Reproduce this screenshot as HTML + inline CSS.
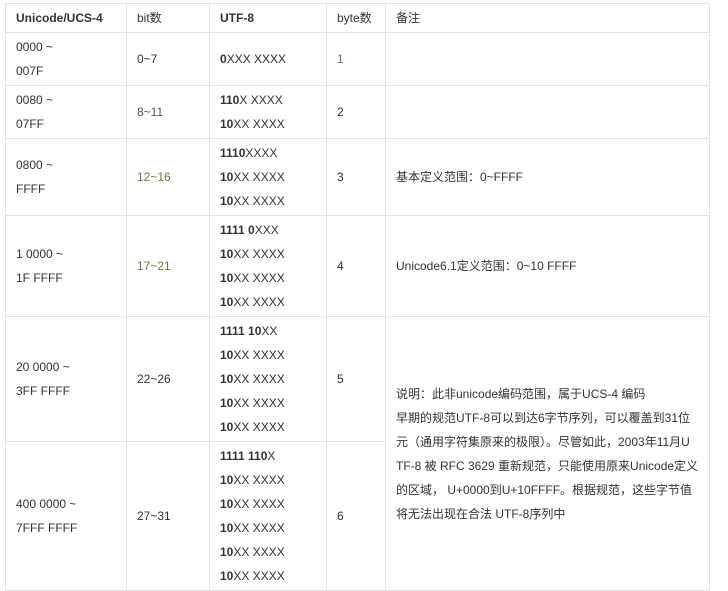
<!DOCTYPE html><html><head><meta charset="utf-8"><style>
body{margin:0;background:#fff;width:728px;height:591px;overflow:hidden;font-family:"Liberation Sans","Noto Sans CJK SC",sans-serif;font-size:12px;color:#333}
.c{position:absolute;box-sizing:border-box;border:1px solid #e3e3e3;display:flex;align-items:center;padding-left:10px;line-height:24px}
b{font-weight:bold}
</style></head><body>
<div style="position:relative">
<div class="c" style="left:5px;top:3px;width:122px;height:30px"><b>Unicode/UCS-4</b></div>
<div class="c" style="left:126px;top:3px;width:84px;height:30px">bit数</div>
<div class="c" style="left:209px;top:3px;width:118px;height:30px"><b>UTF-8</b></div>
<div class="c" style="left:326px;top:3px;width:60px;height:30px">byte数</div>
<div class="c" style="left:385px;top:3px;width:325px;height:30px">备注</div>
<div class="c" style="left:5px;top:32px;width:122px;height:54px"><div>0000 ~<br>007F</div></div>
<div class="c" style="left:126px;top:32px;width:84px;height:54px">0~7</div>
<div class="c" style="left:209px;top:32px;width:118px;height:54px"><div><b>0</b>XXX XXXX</div></div>
<div class="c" style="left:326px;top:32px;width:60px;height:54px;color:#8a6a3a">1</div>
<div class="c" style="left:385px;top:32px;width:325px;height:54px"></div>
<div class="c" style="left:5px;top:85px;width:122px;height:54px"><div>0080 ~<br>07FF</div></div>
<div class="c" style="left:126px;top:85px;width:84px;height:54px;color:#5a4a7a">8~11</div>
<div class="c" style="left:209px;top:85px;width:118px;height:54px"><div><b>110</b>X XXXX<br><b>10</b>XX XXXX</div></div>
<div class="c" style="left:326px;top:85px;width:60px;height:54px">2</div>
<div class="c" style="left:385px;top:85px;width:325px;height:54px"></div>
<div class="c" style="left:5px;top:138px;width:122px;height:78px"><div>0800 ~<br>FFFF</div></div>
<div class="c" style="left:126px;top:138px;width:84px;height:78px;color:#8a6a3a">12~16</div>
<div class="c" style="left:209px;top:138px;width:118px;height:78px"><div><b>1110</b>XXXX<br><b>10</b>XX XXXX<br><b>10</b>XX XXXX</div></div>
<div class="c" style="left:326px;top:138px;width:60px;height:78px">3</div>
<div class="c" style="left:385px;top:138px;width:325px;height:78px">基本定义范围：0~FFFF</div>
<div class="c" style="left:5px;top:215px;width:122px;height:102px"><div>1 0000 ~<br>1F FFFF</div></div>
<div class="c" style="left:126px;top:215px;width:84px;height:102px;color:#8a6a3a">17~21</div>
<div class="c" style="left:209px;top:215px;width:118px;height:102px"><div><b>1111 0</b>XXX<br><b>10</b>XX XXXX<br><b>10</b>XX XXXX<br><b>10</b>XX XXXX</div></div>
<div class="c" style="left:326px;top:215px;width:60px;height:102px">4</div>
<div class="c" style="left:385px;top:215px;width:325px;height:102px">Unicode6.1定义范围：0~10 FFFF</div>
<div class="c" style="left:5px;top:316px;width:122px;height:126px"><div>20 0000 ~<br>3FF FFFF</div></div>
<div class="c" style="left:126px;top:316px;width:84px;height:126px">22~26</div>
<div class="c" style="left:209px;top:316px;width:118px;height:126px"><div><b>1111 10</b>XX<br><b>10</b>XX XXXX<br><b>10</b>XX XXXX<br><b>10</b>XX XXXX<br><b>10</b>XX XXXX</div></div>
<div class="c" style="left:326px;top:316px;width:60px;height:126px">5</div>
<div class="c" style="left:5px;top:441px;width:122px;height:150px"><div>400 0000 ~<br>7FFF FFFF</div></div>
<div class="c" style="left:126px;top:441px;width:84px;height:150px">27~31</div>
<div class="c" style="left:209px;top:441px;width:118px;height:150px"><div><b>1111 110</b>X<br><b>10</b>XX XXXX<br><b>10</b>XX XXXX<br><b>10</b>XX XXXX<br><b>10</b>XX XXXX<br><b>10</b>XX XXXX</div></div>
<div class="c" style="left:326px;top:441px;width:60px;height:150px">6</div>
<div class="c" style="left:385px;top:316px;width:325px;height:275px"><div style="white-space:nowrap">说明：此非unicode编码范围，属于UCS-4 编码<br>早期的规范UTF-8可以到达6字节序列，可以覆盖到31位<br>元（通用字符集原来的极限）。尽管如此，2003年11月U<br>TF-8 被 RFC 3629 重新规范，只能使用原来Unicode定义<br>的区域， U+0000到U+10FFFF。根据规范，这些字节值<br>将无法出现在合法 UTF-8序列中</div></div>
</div>
</body></html>
